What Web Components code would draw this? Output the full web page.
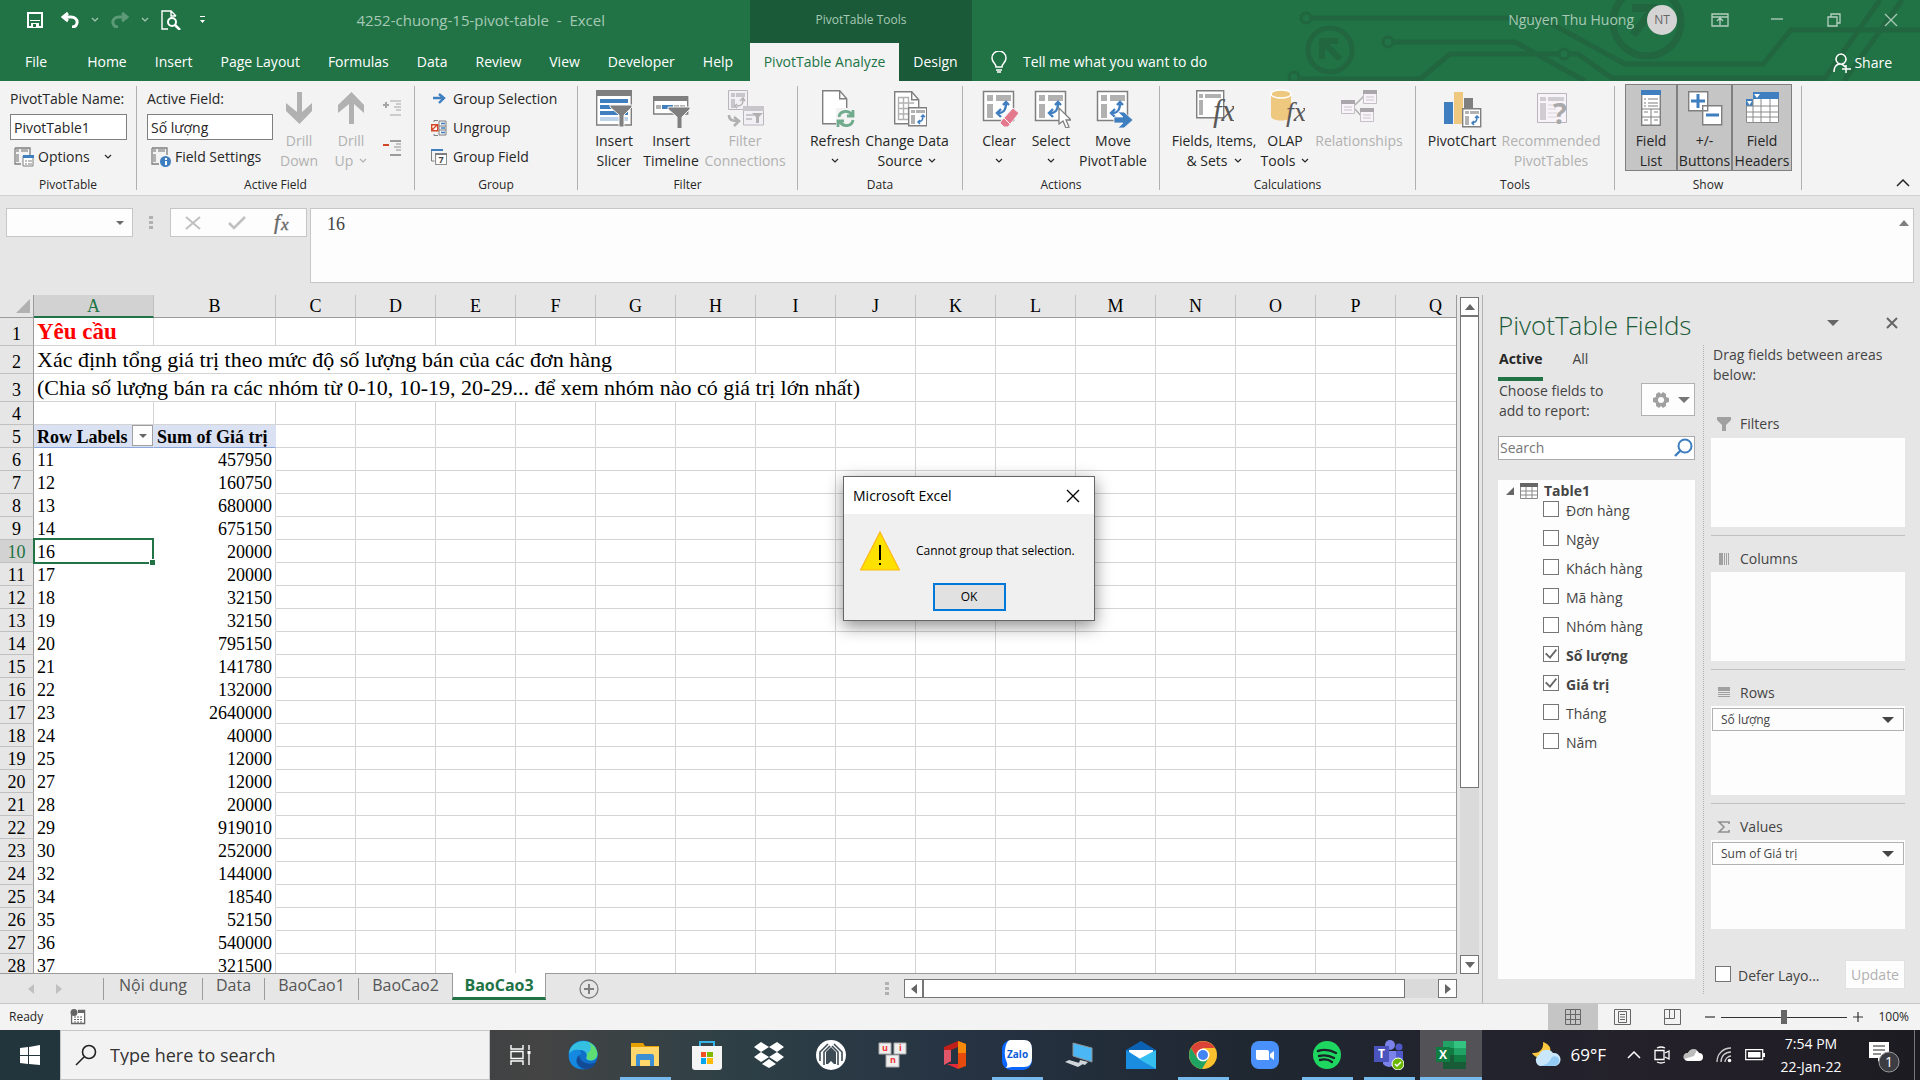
<!DOCTYPE html>
<html lang="vi">
<head>
<meta charset="utf-8">
<title>4252-chuong-15-pivot-table - Excel</title>
<style>
  html, body { height: 100%; margin: 0; }
  body {
    overflow: hidden;
    background: #e6e6e6;
    color: #262626;
    font-family: "Open Sans", "Noto Sans", sans-serif;
    font-size: 14px;
    line-height: 20px;
  }
</style>
</head>
<body>
<excel-app></excel-app>

<script>
// ---------- icons ----------
const pivotArrow = (c = '#3f7ebf') => `<path d="M19 25c6 0 8-3 8-10M24 17l3-3 3 3M22 21l-4 4 4 4" fill="none" stroke="${c}" stroke-width="2.4"/>`;
const pivotTable = (c = '#7f7f7f') => `<path d="M4.5 3.5h30v29h-30z" fill="#fff" stroke="${c}" stroke-width="1.5"/><path d="M8 7h6v6H8zM17 7h15v6H17zM8 16h6v14H8z" fill="#b1b1b1"/>`;
const smallTable = (x, y) => `<g transform="translate(${x} ${y})"><path d="M.7.7h18v18H.7z" fill="#fff" stroke="#7f7f7f" stroke-width="1.4"/><path d="M3 3h4v3H3zM8 3h9v3H8zM3 8h4v9H3z" fill="#b1b1b1"/><path d="M10 15c4 0 5-2 5-6M13 10l2-2 2 2M12 13l-2 2 2 2" fill="none" stroke="#3f7ebf" stroke-width="1.5"/></g>`;
const funnel = (x, y, c = '#7f7f7f') => `<path transform="translate(${x} ${y})" d="M0 0h22v2l-8 8v12h-5V10L0 2z" fill="${c}" stroke="#f3f3f3"/>`;
const fx = (x, y, s = 31) => `<text x="${x}" y="${y}" font-family="Liberation Serif" font-style="italic" font-size="${s}" fill="#595959">fx</text>`;

// name: [width, height, drawing]
const ICONS = {
  save: [16, 16, '<path d="M1 1h14v14H1z" fill="none" stroke="#fff" stroke-width="2"/><path d="M3 8h10v1H3zM4 11h8v5H4z" fill="#fff"/><path d="M6 12h3v3H6z" fill="#217346"/>'],
  undo: [18, 16, '<path d="M7 1 2 5l5 4M2 5h8c8 0 8 10 1 10" fill="none" stroke="#fff" stroke-width="3"/>'],
  redo: [18, 16, '<path d="m11 1 5 4-5 4M16 5H8C0 5 0 15 7 15" fill="none" stroke="#5d9a77" stroke-width="3"/>'],
  preview: [20, 20, '<path d="M7 19H1V1h9l5 5M10 1v5h5" fill="none" stroke="#fff" stroke-width="1.4"/><circle cx="11" cy="12" r="4" fill="none" stroke="#fff" stroke-width="2"/><path d="m14 15 5 5" stroke="#fff" stroke-width="2.5"/>'],
  custom: [8, 8, '<path d="M1 0h5v1H1zM1 4h5L3.5 7z" fill="#fff"/>'],
  chev: [8, 8, '<path d="m1 2 3 3 3-3" fill="none" stroke="currentColor" stroke-width="1.2"/>'],
  bulb: [16, 22, '<path d="M5 16c0-4-4-4-4-9a7 7 0 0 1 14 0c0 5-4 5-4 9zM5 19h6M6 21h4" fill="none" stroke="#fff" stroke-width="1.5"/>'],
  person: [18, 20, '<path d="M7 11a5 5 0 1 1 2 0M1 19c0-9 8-10 11-5M9 16h9M13 12v8" fill="none" stroke="#fff" stroke-width="1.5"/>'],
  ribbonopt: [18, 14, '<path d="M1 1h16v12H1zM1 4h16M9 12V6M6 8l3-3 3 3" fill="none" stroke="#b5d0c0" stroke-width="1.3"/>'],
  min: [14, 14, '<path d="M1 6h12" stroke="#b5d0c0" stroke-width="1.3"/>'],
  max: [14, 14, '<path d="M1 4h9v9H1zM4 4V1h9v9h-3" fill="none" stroke="#b5d0c0" stroke-width="1.3"/>'],
  close: [14, 14, '<path d="m1 1 12 12M13 1 1 13" stroke="currentColor" stroke-width="1.3"/>'],
  closebold: [14, 14, '<path d="m2 2 10 10M12 2 2 12" stroke="#666" stroke-width="2"/>'],
  options: [20, 20, '<path d="M1 1h15v7M1 1v16h6" fill="none" stroke="#7f7f7f" stroke-width="1.3"/><path d="M2 2h3v3H2zM7 2h7v3H7zM2 7h3v8H2z" fill="#b1b1b1"/><path d="M9 9h10v10H9z" fill="#fff" stroke="#7f7f7f"/><path d="M9 8h11v3H9z" fill="#3f7ebf"/><path d="M11 14h2m1 0h4m-7 3h2m1 0h4" stroke="#7f7f7f"/>'],
  settings: [20, 20, '<path d="M1 1h15v7M1 1v16h7" fill="none" stroke="#7f7f7f" stroke-width="1.3"/><path d="M2 2h3v3H2zM7 2h7v3H7zM2 7h3v8H2z" fill="#b1b1b1"/><circle cx="14.5" cy="14.5" r="5.5" fill="#3f7ebf"/><path d="M14 11h2v2h-2zM14 14h2v4h-2z" fill="#fff"/>'],
  down: [40, 40, '<path d="M18 4h5v20l10-9v8L20.5 36 7 23v-8l11 9z" fill="#b1b1b1"/>'],
  up: [40, 40, '<path d="M18 36h5V16l10 9v-8L20.5 4 7 17v8l11-9z" fill="#b1b1b1"/>'],
  expand: [18, 16, '<path d="M0 5h6M3 2v6" stroke="#a6a6a6" stroke-width="2"/><path d="M7 1h11M13 4h5M11 7h7M13 10h5M7 15h11" stroke="#c0c0c0" stroke-width="1.5"/>'],
  collapse: [18, 16, '<path d="M0 5h6" stroke="#d24726" stroke-width="2"/><path d="M7 1h11M7 15h11" stroke="#7f7f7f" stroke-width="1.5"/><path d="M13 4h5M11 7h7M13 10h5" stroke="#b1b1b1" stroke-width="1.5"/>'],
  arrow: [16, 16, '<path d="M2 7h10M8 3l5 4-5 5" fill="none" stroke="#3f7ebf" stroke-width="2.4"/>'],
  ungroup: [16, 16, '<path d="M3 2V.5h4M3 14v1.5h4M8 1h7v14H8zM8 6h7M8 10h7" fill="none" stroke="#7f7f7f"/><path d="M10 3.5h4M10 8h4M10 12.5h4" stroke="#3f7ebf" stroke-width="1.4"/><path d="M.7 4.7h6v6h-6zM1 10l5-5" fill="#fff" stroke="#d24726" stroke-width="1.4"/>'],
  groupfield: [16, 16, '<path d="M.5 1v11h3" fill="none" stroke="#7f7f7f"/><path d="M0 0h12v2H0z" fill="#3f7ebf"/><path d="M4.6 4.6h11v11h-11z" fill="#fff" stroke="#7f7f7f"/><path d="M4 4h12v2H4z" fill="#7f7f7f"/><text x="7.5" y="14" font-size="9" font-weight="bold" fill="#444">7</text>'],
  slicer: [40, 40, `<path d="M2.7 4h34.6v33H2.7z" fill="#fff" stroke="#7f7f7f" stroke-width="1.4"/><path d="M2 2h36v6H2z" fill="#7f7f7f"/><path d="M6 11h28v4H6zM6 17h28v4H6zM6 23h28v4H6z" fill="#3f7ebf"/><path d="M6 29h28v4H6z" fill="#bcd3ea"/>${funnel(16, 17)}`],
  timeline: [40, 40, `<path d="M2.7 9h34v17h-34z" fill="#fff" stroke="#7f7f7f" stroke-width="1.4"/><path d="M2 8h35v5H2z" fill="#7f7f7f"/><path d="M5 17h5v4H5zM23 17h5v4h-5zM29 17h5v4h-5z" fill="#b1b1b1"/><path d="M11 17h11v4H11z" fill="#3f7ebf"/>${funnel(17, 19)}`],
  connections: [40, 40, '<g fill="#f3f0f5" stroke="#b9b5bc"><path d="M3.5 2.5h19v19h-19zM18.5 19h20v18h-20z"/></g><path d="M6 5h4v4H6zM11 5h9v4h-9zM6 11h4v9H6zM18 18h21v5H18zM21 26h8v2h-8zM21 30h6v2h-6z" fill="#c9c6cb"/><path d="M12 18c5 0 6-2 6-6M15 13l3-3 2 3M12 16l-2 2 2 2" fill="none" stroke="#b1b1b1" stroke-width="1.5"/><path d="M27 25h11l-4 4v6h-3v-6z" fill="#b1b1b1"/><path d="M4 27c0 5 3 6 9 6M9 29l5 4-5 5" fill="none" stroke="#b1b1b1" stroke-width="2.6"/>'],
  refresh: [40, 40, '<path d="M7.7 2.7h17l7 8v25H7.7z" fill="#fff" stroke="#7f7f7f" stroke-width="1.4"/><path d="M24.7 2.7v8h7" fill="none" stroke="#7f7f7f" stroke-width="1.4"/><path d="M21 20h20v20H21z" fill="#f3f3f3"/><path d="M24 29c1-7 10-7 13-2M38 22v6h-6M38 32c-1 7-10 7-13 2M23 39v-6h6" fill="none" stroke="#70ab8d" stroke-width="2.8"/>'],
  source: [40, 40, `<path d="M7.7 3.7h17l7 8v24h-24z" fill="#fff" stroke="#7f7f7f" stroke-width="1.4"/><path d="M24.7 3.7v8h7" fill="none" stroke="#7f7f7f" stroke-width="1.4"/><path d="M11.5 9.5h10v22h-10zM16.5 9v23M11 15h16M11 20.5h12M11 26h12" fill="none" stroke="#b1b1b1" stroke-width="1.4"/>${smallTable(21, 19)}`],
  clear: [40, 40, `${pivotTable()}${pivotArrow()}<path d="m22 33 12-13 6 5-11 14h-4l-4-4z" fill="#e4798e" stroke="#f3f3f3"/><path d="m25 30 6 6" stroke="#fff"/>`],
  select: [40, 40, `${pivotTable()}${pivotArrow()}<path d="M28 20v16l4-3 3 7 3-1-3-7h5z" fill="#fff" stroke="#7f7f7f" stroke-width="1.3"/>`],
  move: [40, 40, `${pivotTable()}${pivotArrow()}<path d="M21 29h9l-5-5h6l9 8-9 8h-6l5-5h-9z" fill="#3f7ebf" stroke="#f3f3f3" stroke-width=".8"/>`],
  fields: [40, 40, `<path d="M2.7 2.7h27v27h-27z" fill="#fff" stroke="#7f7f7f" stroke-width="1.4"/><path d="M5 6h4v4H5zM11 6h16v4H11zM5 12h4v15H5z" fill="#b1b1b1"/>${fx(19, 33)}`],
  olap: [40, 40, `<path d="M6 6v22c0 6 20 6 20 0V6z" fill="#edc87e"/><ellipse cx="16" cy="6" rx="10" ry="4" fill="#edc87e" stroke="#fff" stroke-width="1.4"/>${fx(21, 33, 28)}`],
  relations: [40, 40, '<path d="m16 17 9-9M16 21l7 8" stroke="#b1b1b1" stroke-width="1.5"/><g fill="#f8f3f9" stroke="#c3bfc5"><path d="M2.5 12.5h13v13h-13zM24.5 2.5h13v13h-13zM21.5 20.5h13v13h-13z"/></g><path d="M2 12h14v4H2zM24 2h14v4H24zM21 20h14v4H21z" fill="#aaa6ac"/><path d="M5 19h8M5 22h8M27 9h8M27 12h8M24 27h8M24 30h8" stroke="#c9c6cb"/>'],
  chart: [40, 40, `<path d="M2 14h9v22H2z" fill="#3f7ebf"/><path d="M12 4h9v32h-9z" fill="#edc87e"/><path d="M22 10h9v12h-9z" fill="#7f7f7f"/>${smallTable(20, 20)}`],
  recommended: [40, 40, '<path d="M6.500 5.500h29v29h-29z" fill="#f8f3f9" stroke="#b9b5bc"/><path d="M9 9h6v4H9zM17 9h16v4H17zM9 15h6v17H9z" fill="#d0cdd2"/><path d="M17 17h11M17 21h8M17 25h9M17 29h9" stroke="#d9d6db"/><text x="22" y="36" font-size="29" font-weight="bold" fill="#a9a9a9">?</text>'],
  fieldlist: [40, 40, '<path d="M10.7 3h18.6v34.3H10.7z" fill="#fff" stroke="#7f7f7f" stroke-width="1.4"/><path d="M10 2h20v5H10z" fill="#3f7ebf"/><path d="M13 11h2m2 0h10M13 15h2m2 0h10M13 18h2m2 0h10M10 21h20M10 29h20M20 21v16M13 24h4M23 24h4M13 32h4M23 32h4" stroke="#7f7f7f"/>'],
  plusminus: [40, 40, '<g fill="#fff" stroke="#7f7f7f" stroke-width="1.4"><path d="M3.7 3.7h19v19h-19zM17.7 17.7h19v19h-19z"/></g><path d="M6 13h14M13 6v14M21 27h13" stroke="#3f7ebf" stroke-width="3"/>'],
  headers: [40, 40, '<path d="M11 4h26v31H4V11h7z" fill="#fff"/><path d="M11 4h26v7H11zM4 11h7v7H4z" fill="#3f7ebf"/><path d="M4.5 18v16.5h32V11M4 18h33M4 24h33M4 29h33M11 11v24M19 11v24M28 11v24" fill="none" stroke="#8a8a8a"/><path d="M12 6h6l-3 4zM5 13h5l-2.5 4z" fill="#fff"/>'],
  chevup: [14, 8, '<path d="m1 7 6-6 6 6" fill="none" stroke="currentColor" stroke-width="1.5"/>'],
  tri: [12, 8, '<path d="M0 1h12L6 7z" fill="currentColor"/>'],
  trismall: [8, 6, '<path d="M0 1h8L4 5z" fill="currentColor"/>'],
  triup: [10, 6, '<path d="M0 6h10L5 0z" fill="currentColor"/>'],
  left: [6, 10, '<path d="M6 0v10L0 5z" fill="currentColor"/>'],
  right: [6, 10, '<path d="M0 0v10l6-5z" fill="currentColor"/>'],
  dots: [4, 14, '<path d="M0 0h4v3H0zM0 5h4v3H0zM0 10h4v3H0z" fill="#b1b1b1"/>'],
  cross: [16, 14, '<path d="m1 1 14 12M15 1 1 13" stroke="#c0c0c0" stroke-width="2"/>'],
  check: [18, 14, '<path d="m1 7 5 5L17 1" fill="none" stroke="#c0c0c0" stroke-width="2.6"/>'],
  fx: [20, 22, '<text x="1" y="17" font-family="Liberation Serif" font-style="italic" font-size="21" fill="#6a6a6a" stroke="#6a6a6a" stroke-width=".4">f</text><text x="8" y="18" font-family="Liberation Serif" font-style="italic" font-size="17" fill="#6a6a6a" stroke="#6a6a6a" stroke-width=".4">x</text>'],
  gear: [16, 16, '<path d="m6 0 2 2 2-2 3 2v3l3 1v4l-3 1v3l-3 2-2-2-2 2-3-2v-3l-3-1V6l3-1V2z" fill="#a0a0a0"/><circle cx="8" cy="8" r="3" fill="#fdfdfd"/>'],
  search: [20, 20, '<circle cx="12" cy="8" r="6.5" fill="none" stroke="#3f7ebf" stroke-width="2"/><path d="m8 12-6 6" stroke="#3f7ebf" stroke-width="2.4"/>'],
  tree: [8, 8, '<path d="M8 0v8H0z" fill="#666"/>'],
  table: [18, 16, '<path d="M.5.5h17v15H.5zM0 8h18M0 12h18M6 4v12M12 4v12" fill="#fff" stroke="#8a8a8a"/><path d="M0 0h18v4H0z" fill="#666"/>'],
  filters: [16, 16, '<path d="M1 1h14v3l-5 5v6H6V9L1 4z" fill="#a0a0a0"/>'],
  columns: [16, 16, '<path d="M3 2h4v12H3zM8 2h1v12H8zM10 2h1v12h-1zM12 2h1v12h-1z" fill="#a0a0a0"/>'],
  rows: [16, 16, '<path d="M2 2h12v4H2zM2 7h12v1H2zM2 9h12v1H2zM2 11h12v1H2z" fill="#a0a0a0"/>'],
  values: [16, 16, '<path d="M13 5V3H3l5 5-5 5h10v-2" fill="none" stroke="#909090" stroke-width="1.6"/>'],
  plus: [20, 20, '<circle cx="10" cy="10" r="9" fill="none" stroke="#7f7f7f" stroke-width="1.3"/><path d="M5 10h10M10 5v10" stroke="#7f7f7f" stroke-width="2"/>'],
  macro: [16, 16, '<path d="M1.6 5v9.5h13v-13H8" fill="#fff" stroke="#666" stroke-width="1.3"/><circle cx="4" cy="3.5" r="3.5" fill="#666"/><path d="M8 1h7v3H8z" fill="#666"/><path d="M4 8h8M4 10.5h8M4 13h8" stroke="#666" stroke-dasharray="2 1"/>'],
  normal: [16, 16, '<path d="M.5.5h15v15H.5zM0 5.5h16M0 10.5h16M5.5 0v16M10.5 0v16" fill="none" stroke="#666"/>'],
  page: [18, 16, '<path d="M.5.5h16v15H.5zM4.5 2.5h8v11h-8zM6 5.5h5M6 8h5M6 10.5h5" fill="none" stroke="#666"/>'],
  breaks: [18, 16, '<path d="M.5.5h16v15H.5zM.5 9.5h10V.5M5.5.5v9" fill="none" stroke="#666"/>'],
  minus: [10, 10, '<path d="M0 5h10" stroke="#333" stroke-width="1.2"/>'],
  add: [10, 10, '<path d="M0 5h10M5 0v10" stroke="#333" stroke-width="1.2"/>'],
  warn: [40, 40, '<path d="M20 1 39.5 39H.5z" fill="#fce100" stroke="#ffb713" stroke-width="1.2"/><path d="M19 14h2v15h-2zM19 32h2v2h-2z" fill="#000"/>'],
  win: [20, 20, '<path d="m0 3 8-1v8H0zM9 2l11-2v10H9zM0 11h8v8l-8-1zM9 11h11v9L9 19z" fill="#fff"/>'],
  lens: [22, 22, '<circle cx="14" cy="8" r="6.5" fill="none" stroke="#222" stroke-width="1.6"/><path d="m9 13-8 8" stroke="#222" stroke-width="1.6"/>'],
  taskview: [22, 20, '<path d="M1 0v4h12V0M1 20v-4h12v4M1 6.5h12v7H1zM19 0v5M19 9v11" fill="none" stroke="#fff" stroke-width="1.4"/><path d="M17.5 6h3v3h-3z" fill="#fff"/>'],
  edge: [30, 30, '<circle cx="15" cy="15" r="14.5" fill="#0f6fc9"/><path d="M1 13C3-2 27-4 29.5 13c1 7-6 9-10 7-3-2 0-3-1-6-2-6-13-6-17 5z" fill="#35bfe0"/><path d="M20 2c7 3 10 9 9 13-1 6-8 6-10 4-1-2 1-3 0-6 5-1 5-8 1-11z" fill="#5fdd72"/><path d="M11 12c-6 7-1 17 8 17 5 0 8-4 9-7-7 4-18 1-17-10z" fill="#134b96"/><path d="M1 14c5-7 13-4 12 0-6 3-7 11 1 15C6 29 0 23 1 14z" fill="#1489df"/>'],
  folder: [28, 26, '<path d="M0 1h12l2 3h14v20H0z" fill="#e5a000"/><path d="M0 5h28v19H0z" fill="#ffd76a"/><path d="M5 24V14q0-2 2-2h14q2 0 2 2v10h-4v-6H9v6z" fill="#3d8fd3"/>'],
  store: [30, 30, '<path d="M8 8V2h14v6" fill="none" stroke="#35b4e8" stroke-width="2"/><path d="M0 6h30v21q0 3-3 3H3q-3 0-3-3z" fill="#f4f4f4"/><path d="M9 12h5v5H9z" fill="#f25022"/><path d="M15 12h6v5h-6z" fill="#7fba00"/><path d="M9 18h5v6H9z" fill="#00a4ef"/><path d="M15 18h6v6h-6z" fill="#ffb900"/>'],
  dropbox: [30, 26, '<path d="m7 0 8 5-8 5-7-5zM23 0l7 5-7 5-8-5zM7 10l8 5-8 5-7-5zM23 10l7 5-7 5-8-5zM15 17l7 5-7 4-7-4z" fill="#fff"/>'],
  arch: [30, 30, '<circle cx="15" cy="15" r="15" fill="#fff"/><path d="M4 21V12l8-8M26 21V12l-8-8" fill="none" stroke="#3d4c54" stroke-width="1.6"/><path d="M8 25V12l6-6M22 25V12l-6-6" fill="none" stroke="#3d4c54" stroke-width="1.6"/><path d="M10 24V12l5-5 5 5v12h-2l-3-3-3 3z" fill="#3d4c54"/>'],
  unikey: [30, 26, '<g fill="#eee" stroke="#aaa"><path d="M1 1h12v11H1zM16 1h12v11H16zM8 13h13v12H8z"/></g><g font-size="9" font-weight="bold" fill="#ee343a"><text x="4" y="9">u</text><text x="21" y="9">i</text><text x="12" y="21">n</text></g>'],
  office: [24, 28, '<path d="M15 0v6L8 9v12H1V6z" fill="#c01f1a"/><path d="M1 9h7v11l-7 4z" fill="#e0566a"/><path d="m15 0 8 3v22l-8 3z" fill="#e64a0c"/><path d="m15 0 8 3v9h-8z" fill="#f58a0b"/><path d="M4 23h11v5z" fill="#e8293c"/>'],
  zalo: [30, 30, '<rect width="30" height="30" rx="9" fill="#0a66ff"/><path d="M8 0h14q8 0 8 9v9q0 9-8 9H10l-6 1q2-3 1-5-3-6-2-13 1-9 5-10z" fill="#fff"/><text x="5" y="18" font-size="10" font-weight="bold" fill="#0a5cd8">Zalo</text>'],
  remote: [28, 26, '<path d="m8 1 19 5v14L8 14z" fill="#4bb8f5" stroke="#8b9499"/><path d="m4 18 14 4-5 3-13-5zM15 18l8 2-3 3-6-2z" fill="#cfd6da"/>'],
  mail: [30, 28, '<path d="m0 9 15-9 15 9v19H0z" fill="#0b62b3"/><path d="M3 9h24v12L15 25 3 18z" fill="#fff"/><path d="m0 9 30 19H0z" fill="#1b8de0"/><path d="M30 9v19L13 18z" fill="#35bff0"/>'],
  chrome: [28, 28, '<circle cx="14" cy="14" r="14" fill="#fbc02d"/><path d="M2 7a14 14 0 0 1 24 0H14L8 17z" fill="#db4437"/><path d="M2 7a14 14 0 0 0 11 21l6-10-11-1z" fill="#1ea362"/><circle cx="14" cy="14" r="6.5" fill="#fff"/><circle cx="14" cy="14" r="5" fill="#4285f4"/>'],
  zoom: [28, 28, '<rect width="28" height="28" rx="8" fill="#4a90fa"/><path d="M5 9h11q2 0 2 2v8H7q-2 0-2-2zM19 13l4-3v9l-4-3z" fill="#fff"/>'],
  spotify: [28, 28, '<circle cx="14" cy="14" r="14" fill="#1ed760"/><path d="M5 10q9-3 18 2M6 15q8-2 15 2M7 19q7-2 12 2" fill="none" stroke="#1b2228" stroke-width="2.4" stroke-linecap="round"/>'],
  teams: [30, 30, '<circle cx="16" cy="5" r="5" fill="#7b83eb"/><circle cx="25" cy="7" r="3.5" fill="#5059c9"/><path d="M9 11h14v9a8 8 0 0 1-14 4z" fill="#7b83eb"/><path d="M22 11h7v8q-2 5-7 4z" fill="#5059c9"/><path d="M0 6h15v16H0z" fill="#4b53bc"/><text x="4" y="18" font-size="12" font-weight="bold" fill="#fff">T</text><circle cx="24" cy="24" r="6" fill="#6bb700" stroke="#fff"/><path d="m21 24 2 2 4-4" fill="none" stroke="#fff" stroke-width="1.5"/>'],
  excel: [30, 28, '<path d="M7 0h11v7H7z" fill="#21a366"/><path d="M18 0h12v7H18z" fill="#33c481"/><path d="M7 7h11v7H7z" fill="#107c41"/><path d="M18 7h12v7H18z" fill="#21a366"/><path d="M7 14h11v7H7z" fill="#185c37"/><path d="M18 14h12v7H18z" fill="#107c41"/><path d="M7 21h23v7H7z" fill="#185c37"/><path d="M0 6h14v15H0z" fill="#107c41"/><text x="3" y="18" font-size="12" font-weight="bold" fill="#fff">X</text>'],
  weather: [30, 26, '<path d="M11 0c1 6-3 12-11 11 3 6 14 7 18-1C20 4 14 1 11 0z" fill="#ffc83d"/><path d="M8 24a6 6 0 0 1-1-11 8 8 0 0 1 14-2 6 6 0 0 1 2 13z" fill="#c9e6fb"/><path d="M8 24c6-1 9-3 12-9 3-2 8 0 7 5-1 4-6 4-9 4z" fill="#94cbf5"/>'],
  meet: [16, 18, '<path d="M1 4.5h9v9H1zM11 7l4-2v8l-4-2M3 2q4-2 8 0M3 16q4 2 8 0" fill="none" stroke="#fff" stroke-width="1.3"/>'],
  cloud: [20, 14, '<path d="M5 13a4 4 0 0 1 0-8 6 6 0 0 1 11 0 4 4 0 0 1 0 8z" fill="#fff"/><path d="M5 5a6 6 0 0 1 9-3l-3 6-10 3a4 4 0 0 1 4-6z" fill="#bbb"/>'],
  wifi: [16, 16, '<path d="M1 15C1 7 7 1 15 1M5 15C5 9 9 5 15 5M9 15c0-3 3-6 6-6" fill="none" stroke="#ccc" stroke-width="1.3"/><circle cx="13.5" cy="13.5" r="1.8" fill="#fff"/>'],
  battery: [20, 12, '<path d="M.7.7h17v10H.7z" fill="none" stroke="#fff" stroke-width="1.2"/><path d="M3 3h12.5v5.5H3zM18 4h2v4h-2z" fill="#fff"/>'],
  note: [32, 32, '<path d="M0 1h20v16h-8l-3 4v-4H0z" fill="#fff"/><path d="M4 5h12M4 9h12M4 13h8" stroke="#222"/><circle cx="20" cy="21" r="10" fill="#3b3d42" stroke="#999"/><text x="16" y="26" font-size="14" fill="#fff">1</text>'],
  corner: [14, 14, '<path d="M14 0v14H0z" fill="#b1b1b1"/>'],
};

class XlIcon extends HTMLElement {
  connectedCallback() {
    const [w, h, art] = ICONS[this.getAttribute('name')];
    this.attachShadow({ mode: 'open' }).innerHTML = `
      <style>
        :host { display: inline-flex; flex: none; }
        svg { display: block; font-family: "Open Sans", sans-serif; }
      </style>
      <svg width="${w}" height="${h}" viewBox="0 0 ${w} ${h}" aria-hidden="true">${art}</svg>`;
  }
}
customElements.define('xl-icon', XlIcon);

// Shared base: stamps styles and markup into an open shadow root.
class XlElement extends HTMLElement {
  connectedCallback() {
    if (this.shadowRoot) return;
    const template = document.createElement('template');
    template.innerHTML = `
      <style>
        *, *::before, *::after { box-sizing: border-box; }
        button, input, select { margin: 0; padding: 0; font: inherit; color: inherit; background: none; border: 0; border-radius: 0; outline: 0; }
        button { white-space: nowrap; }
        ${this.getStyles()}
      </style>
      ${this.getMarkup()}`;
    this.attachShadow({ mode: 'open' }).appendChild(template.content.cloneNode(true));
  }
}

// ---------- title bar and tabs ----------
class TitleBar extends XlElement {
  getStyles() {
    return `
      :host { display: grid; grid-template-columns: 750px 222px 1fr; position: relative; background: #217346; color: #fff; height: 81px; }
      .art { position: absolute; right: 0; top: 0; }
      .part { display: grid; grid-template-rows: 43px 38px; position: relative; }
      .top { display: flex; align-items: center; color: #a6c9b5; padding-bottom: 4px; }
      .quick { gap: 12px; padding-left: 27px; }
      .quick button { display: flex; }
      .quick .push { margin-left: 6px; }
      .name { margin-left: auto; padding-right: 145px; white-space: pre; font-size: 15px; }
      .tabs { display: flex; padding-left: 11px; }
      .tabs a { color: #fff; text-decoration: none; padding: 9px 14px 0; white-space: nowrap; }
      .tabs a:first-child { margin-right: 12px; }
      .context { background: #1b5a38; }
      .context .top { justify-content: center; font-size: 12px; }
      .context .tabs { padding: 0; }
      .context a { padding: 9px 0 0; width: 73px; text-align: center; }
      .context a.active { background: #f3f3f3; color: #217346; width: 149px; margin: 0; }
      .user { justify-content: flex-end; padding-right: 20px; }
      .avatar { width: 30px; height: 30px; border-radius: 50%; background: #d4d4d4; color: #666; display: grid; place-items: center; font-size: 12px; margin: 0 34px 0 13px; }
      .user button { display: grid; place-items: center; width: 18px; margin-right: 39px; }
      .user button:last-child { margin-right: 0; }
      .row { display: flex; justify-content: space-between; padding: 0 28px 0 19px; }
      .row button { display: flex; align-items: center; gap: 16px; height: 38px; }
      .row .share { gap: 3px; padding-top: 2px; }
    `;
  }
  getMarkup() {
    const tab = t => `<a href="#">${t}</a>`;
    return `
      <svg class="art" width="640" height="81" viewBox="0 0 640 81" fill="none" stroke="#21663f" stroke-width="5" aria-hidden="true">
        <circle cx="26" cy="18" r="5" stroke-width="3"/><path d="M31 18h200l30 0 84 46h138l28-34h129"/>
        <circle cx="108" cy="42" r="5" stroke-width="3"/><path d="M113 42h122l70 39"/>
        <circle cx="14" cy="77" r="5" stroke-width="3"/><path d="M19 79h121l30-25h108M290 54h8l34 24h213L600 0M564 81 622 0"/>
        <circle cx="284" cy="54" r="5" stroke-width="3"/>
        <circle cx="50" cy="50" r="22"/><path d="M42 59V41h16M43 42l17 17" stroke-width="6"/>
        <circle cx="367" cy="22" r="34" stroke-width="7"/><path d="M352 8h22v20M374 8l-21 27" stroke-width="8"/>
      </svg>
      <div class="part">
        <div class="top quick">
          <button aria-label="Save"><xl-icon name="save"></xl-icon></button>
          <button aria-label="Undo" class="push"><xl-icon name="undo"></xl-icon></button><xl-icon name="chev"></xl-icon>
          <button aria-label="Redo"><xl-icon name="redo"></xl-icon></button><xl-icon name="chev"></xl-icon>
          <button aria-label="Print Preview"><xl-icon name="preview"></xl-icon></button>
          <button aria-label="Customize" class="push"><xl-icon name="custom"></xl-icon></button>
          <span class="name">4252-chuong-15-pivot-table  -  Excel</span>
        </div>
        <nav class="tabs">${['File', 'Home', 'Insert', 'Page Layout', 'Formulas', 'Data', 'Review', 'View', 'Developer', 'Help'].map(tab).join('')}</nav>
      </div>
      <div class="part context">
        <div class="top">PivotTable Tools</div>
        <nav class="tabs"><a href="#" class="active">PivotTable Analyze</a><a href="#">Design</a></nav>
      </div>
      <div class="part">
        <div class="top user">
          <span>Nguyen Thu Huong</span><span class="avatar">NT</span>
          <button aria-label="Ribbon options"><xl-icon name="ribbonopt"></xl-icon></button>
          <button aria-label="Minimize"><xl-icon name="min"></xl-icon></button>
          <button aria-label="Restore"><xl-icon name="max"></xl-icon></button>
          <button aria-label="Close"><xl-icon name="close"></xl-icon></button>
        </div>
        <div class="row">
          <button><xl-icon name="bulb"></xl-icon>Tell me what you want to do</button>
          <button class="share"><xl-icon name="person"></xl-icon>Share</button>
        </div>
      </div>`;
  }
}
customElements.define('title-bar', TitleBar);

// ---------- ribbon ----------
class RibbonGroup extends XlElement {
  getStyles() {
    return `
      :host { display: grid; grid-template-columns: 1fr 1px; height: 114px; }
      .main { display: grid; grid-template-rows: 94px 1fr; min-width: 0; }
      .content { display: flex; padding: 3px 0 0 10px; }
      .caption { text-align: center; font-size: 12px; line-height: 20px; }
      .sep { background: #b1b1b1; margin: 5px 0; }
    `;
  }
  getMarkup() {
    return `
      <div class="main"><div class="content"><slot></slot></div><div class="caption">${this.getAttribute('caption')}</div></div>
      <div class="sep"></div>`;
  }
}
customElements.define('ribbon-group', RibbonGroup);

class RibbonButton extends XlElement {
  getStyles() {
    return `
      :host { display: block; flex: 0 0 auto; width: var(--w); }
      button { width: 100%; height: 87px; display: flex; flex-direction: column; align-items: center; padding-top: 4px; }
      span { display: flex; align-items: center; gap: 6px; height: 20px; }
      span:first-of-type { margin-top: 3px; }
      :host([disabled]) button { color: #b1b1b1; }
      :host([pressed]) button { background: #c5c5c5; outline: 1px solid #7f7f7f; outline-offset: -1px; }
    `;
  }
  getMarkup() {
    const [first, second = ''] = this.getAttribute('label').split('|');
    const chev = this.hasAttribute('menu') ? '<xl-icon name="chev"></xl-icon>' : '';
    return `<button ${this.hasAttribute('disabled') ? 'disabled' : ''}><xl-icon name="${this.getAttribute('icon')}"></xl-icon><span>${first}</span><span>${second}${chev}</span></button>`;
  }
}
customElements.define('ribbon-button', RibbonButton);

class RibbonBar extends XlElement {
  getStyles() {
    return `
      :host { display: grid; grid-template-columns: 137px 278px 163px 220px 165px 197px 256px 199px 187px 1fr; background: #f3f3f3; border-bottom: 1px solid #d2d2d2; }
      .stack { display: flex; flex-direction: column; padding-top: 4px; white-space: nowrap; }
      .stack label { height: 26px; padding-top: 1px; }
      .stack input { height: 26px; width: 117px; border: 1px solid #7f7f7f; background: #fff; padding-left: 3px; margin-bottom: 4px; }
      .stack .wide { width: 126px; }
      .stack button { display: flex; align-items: center; gap: 4px; height: 26px; padding-left: 4px; }
      .stack button .push { margin-left: 10px; }
      .stack.list button { gap: 6px; padding-left: 6px; height: 29px; }
      .stack.list { padding-top: 0; }
      .mini { display: flex; flex-direction: column; gap: 24px; padding: 16px 0 0 6px; }
      .mini button { display: flex; }
      .end { display: flex; justify-content: flex-end; align-items: flex-end; padding: 0 10px 3px 0; }
    `;
  }
  getMarkup() {
    return `
      <ribbon-group caption="PivotTable">
        <div class="stack">
          <label for="pt">PivotTable Name:</label><input id="pt" value="PivotTable1">
          <button><xl-icon name="options"></xl-icon>Options <xl-icon class="push" name="chev"></xl-icon></button>
        </div>
      </ribbon-group>
      <ribbon-group caption="Active Field">
        <div class="stack">
          <label for="af">Active Field:</label><input id="af" class="wide" value="Số lượng">
          <button><xl-icon name="settings"></xl-icon>Field Settings</button>
        </div>
        <ribbon-button style="--w:52px" icon="down" label="Drill|Down" disabled></ribbon-button>
        <ribbon-button style="--w:52px" icon="up" label="Drill|Up" menu disabled></ribbon-button>
        <div class="mini">
          <button aria-label="Expand Field"><xl-icon name="expand"></xl-icon></button>
          <button aria-label="Collapse Field"><xl-icon name="collapse"></xl-icon></button>
        </div>
      </ribbon-group>
      <ribbon-group caption="Group">
        <div class="stack list">
          <button><xl-icon name="arrow"></xl-icon>Group Selection</button>
          <button><xl-icon name="ungroup"></xl-icon>Ungroup</button>
          <button><xl-icon name="groupfield"></xl-icon>Group Field</button>
        </div>
      </ribbon-group>
      <ribbon-group caption="Filter">
        <ribbon-button style="--w:52px" icon="slicer" label="Insert|Slicer"></ribbon-button>
        <ribbon-button style="--w:62px" icon="timeline" label="Insert|Timeline"></ribbon-button>
        <ribbon-button style="--w:86px" icon="connections" label="Filter|Connections" disabled></ribbon-button>
      </ribbon-group>
      <ribbon-group caption="Data">
        <ribbon-button style="--w:54px" icon="refresh" label="Refresh" menu></ribbon-button>
        <ribbon-button style="--w:90px" icon="source" label="Change Data|Source" menu></ribbon-button>
      </ribbon-group>
      <ribbon-group caption="Actions">
        <ribbon-button style="--w:52px" icon="clear" label="Clear" menu></ribbon-button>
        <ribbon-button style="--w:52px" icon="select" label="Select" menu></ribbon-button>
        <ribbon-button style="--w:72px" icon="move" label="Move|PivotTable"></ribbon-button>
      </ribbon-group>
      <ribbon-group caption="Calculations">
        <ribbon-button style="--w:88px" icon="fields" label="Fields, Items,|&amp; Sets" menu></ribbon-button>
        <ribbon-button style="--w:54px" icon="olap" label="OLAP|Tools" menu></ribbon-button>
        <ribbon-button style="--w:94px" icon="relations" label="Relationships" disabled></ribbon-button>
      </ribbon-group>
      <ribbon-group caption="Tools">
        <ribbon-button style="--w:72px" icon="chart" label="PivotChart"></ribbon-button>
        <ribbon-button style="--w:106px" icon="recommended" label="Recommended|PivotTables" disabled></ribbon-button>
      </ribbon-group>
      <ribbon-group caption="Show">
        <ribbon-button style="--w:52px" icon="fieldlist" label="Field|List" pressed></ribbon-button>
        <ribbon-button style="--w:55px" icon="plusminus" label="+/-|Buttons" pressed></ribbon-button>
        <ribbon-button style="--w:60px" icon="headers" label="Field|Headers" pressed></ribbon-button>
      </ribbon-group>
      <div class="end"><button aria-label="Collapse the Ribbon"><xl-icon name="chevup"></xl-icon></button></div>`;
  }
}
customElements.define('ribbon-bar', RibbonBar);

// ---------- formula bar ----------
class FormulaBar extends XlElement {
  getStyles() {
    return `
      :host { display: flex; align-items: flex-start; padding: 12px 6px; }
      .box { border: 1px solid #c6c6c6; background: #fdfdfd; height: 29px; display: flex; align-items: center; color: #6a6a6a; }
      .name { width: 127px; padding-right: 8px; }
      .name input { flex: 1; min-width: 0; }
      .dots { padding: 8px 17px 0 16px; }
      .buttons { width: 137px; justify-content: space-around; }
      .buttons button { display: flex; }
      .formula { flex: 1; height: 75px; margin-left: 3px; align-items: flex-start; padding: 4px 4px 0 16px; font: 18px/22px "Liberation Serif", serif; color: #444; }
      .formula input { flex: 1; }
      .formula button { display: flex; padding-top: 7px; color: #7f7f7f; }
    `;
  }
  getMarkup() {
    return `
      <div class="box name"><input aria-label="Name Box"><xl-icon name="trismall"></xl-icon></div>
      <xl-icon class="dots" name="dots"></xl-icon>
      <div class="box buttons">
        <button aria-label="Cancel"><xl-icon name="cross"></xl-icon></button>
        <button aria-label="Enter"><xl-icon name="check"></xl-icon></button>
        <button aria-label="Insert Function"><xl-icon name="fx"></xl-icon></button>
      </div>
      <div class="box formula"><input aria-label="Formula" value="16"><button aria-label="Collapse"><xl-icon name="triup"></xl-icon></button></div>`;
  }
}
customElements.define('formula-bar', FormulaBar);

// ---------- sheet ----------
const PIVOT_ROWS = [
  [11, 457950], [12, 160750], [13, 680000], [14, 675150], [16, 20000], [17, 20000], [18, 32150], [19, 32150],
  [20, 795150], [21, 141780], [22, 132000], [23, 2640000], [24, 40000], [25, 12000], [27, 12000], [28, 20000],
  [29, 919010], [30, 252000], [32, 144000], [34, 18540], [35, 52150], [36, 540000], [37, 321500],
];

class SheetGrid extends XlElement {
  getStyles() {
    return `
      :host { display: block; overflow: hidden; min-height: 0; border-right: 1px solid #9b9b9b; border-bottom: 1px solid #9b9b9b; background: #fff; font: 18px/20px "Liberation Serif", serif; color: #000; }
      table { border-collapse: separate; border-spacing: 0; table-layout: fixed; width: 1476px; }
      .n { width: 34px; } .a { width: 120px; } .b { width: 122px; } .c { width: 80px; }
      th { font-weight: normal; background: #e6e6e6; padding: 2px 0 0; }
      thead th { height: 23px; padding: 0; border-right: 1px solid #c0c0c0; border-bottom: 1px solid #9b9b9b; }
      thead th:first-child { border-right-color: #9b9b9b; }
      thead xl-icon { display: flex; justify-content: flex-end; padding-right: 3px; }
      thead .on { background: #d2d2d2; color: #217346; border-bottom: 2px solid #217346; }
      tbody th { border-right: 1px solid #9b9b9b; border-bottom: 1px solid #c0c0c0; }
      tbody .on { background: #d2d2d2; color: #217346; }
      td { padding: 2px 3px 0; border-right: 1px solid #d4d4d4; border-bottom: 1px solid #d4d4d4; white-space: nowrap; position: relative; }
      tr { height: 23px; }
      .tall { height: 28px; }
      .tall td { font-size: 22px; line-height: 26px; padding-top: 0; }
      .tall th { padding-top: 5px; }
      .tall .title { color: #f00; font-weight: bold; font-size: 23px; }
      .head { background: #d9e1f2; border-bottom-color: #8ea9db; border-right-color: #d9e1f2; font-weight: bold; }
      .head button { position: absolute; right: 0; top: 0; width: 21px; height: 21px; border: 1px solid #a0a0a0; background: #fdfdfd; display: grid; place-items: center; color: #666; }
      .label { border-color: #fff; }
      .value { border-bottom-color: #fff; text-align: right; }
      .cursor { z-index: 1; }
      .cursor::before { content: ""; position: absolute; inset: -2px -1px -2px -1px; border: 2px solid #217346; }
      .cursor::after { content: ""; position: absolute; right: -3px; bottom: -4px; width: 7px; height: 7px; background: #217346; border: 1px solid #fff; }
    `;
  }
  getMarkup() {
    const empty = n => '<td></td>'.repeat(n);
    const letters = [...'ABCDEFGHIJKLMNOPQ'].map(l => `<th${l === 'A' ? ' class="on"' : ''}>${l}</th>`).join('');
    const data = PIVOT_ROWS.map(([label, value], i) => {
      const on = label === 16;
      return `<tr><th${on ? ' class="on"' : ''}>${i + 6}</th><td class="label${on ? ' cursor' : ''}">${label}</td><td class="value">${value}</td>${empty(15)}</tr>`;
    }).join('');
    return `
      <table>
        <colgroup><col class="n"><col class="a"><col class="b">${'<col class="c">'.repeat(15)}</colgroup>
        <thead><tr><th><xl-icon name="corner"></xl-icon></th>${letters}</tr></thead>
        <tbody>
          <tr class="tall"><th>1</th><td class="title">Yêu cầu</td>${empty(16)}</tr>
          <tr class="tall"><th>2</th><td colspan="7">Xác định tổng giá trị theo mức độ số lượng bán của các đơn hàng</td>${empty(10)}</tr>
          <tr class="tall"><th>3</th><td colspan="10">(Chia số lượng bán ra các nhóm từ 0-10, 10-19, 20-29... để xem nhóm nào có giá trị lớn nhất)</td>${empty(7)}</tr>
          <tr><th>4</th>${empty(17)}</tr>
          <tr><th>5</th><td class="head">Row Labels<button aria-label="Filter"><xl-icon name="trismall"></xl-icon></button></td><td class="head">Sum of Giá trị</td>${empty(15)}</tr>
          ${data}
        </tbody>
      </table>`;
  }
}
customElements.define('sheet-grid', SheetGrid);

class ScrollBar extends XlElement {
  getStyles() {
    return `
      :host { display: flex; background: #dadada; color: #666; }
      :host([vertical]) { flex-direction: column; width: 19px; }
      :host(:not([vertical])) { height: 19px; }
      button { flex: 0 0 19px; display: grid; place-items: center; background: #fff; border: 1px solid #767676; }
      .thumb { background: #fff; border: 1px solid #767676; flex: 0 1 var(--size); }
      .gap { flex: 1; }
      .flip { transform: rotate(180deg); }
    `;
  }
  getMarkup() {
    const v = this.hasAttribute('vertical');
    return `
      <button aria-label="Back"><xl-icon name="${v ? 'triup' : 'left'}"></xl-icon></button>
      <div class="thumb"></div><div class="gap"></div>
      <button aria-label="Forward"><xl-icon ${v ? 'class="flip"' : ''} name="${v ? 'triup' : 'right'}"></xl-icon></button>`;
  }
}
customElements.define('scroll-bar', ScrollBar);

class SheetTabs extends XlElement {
  getStyles() {
    return `
      :host { display: flex; height: 29px; font-size: 16px; line-height: 22px; color: #555; }
      .nav { display: flex; gap: 22px; width: 103px; padding: 10px 0 0 28px; color: #c0c0c0; }
      a { color: inherit; text-decoration: none; text-align: center; width: var(--w); height: 26px; position: relative; white-space: nowrap; border-left: 1px solid transparent; background: linear-gradient(#9b9b9b, #9b9b9b) 0 4px / 1px 22px no-repeat; background-origin: border-box; }
      a.active { background: #fff; color: #217346; font-weight: bold; border: 0 solid #9b9b9b; border-width: 0 1px 3px; border-bottom-color: #217346; margin-top: -1px; height: 27px; padding-top: 1px; }
      .new { display: flex; padding: 5px 0 0 33px; }
      .dots { margin-left: auto; padding: 8px 15px 0 0; }
      scroll-bar { width: 553px; margin-top: 5px; }
    `;
  }
  getMarkup() {
    return `
      <div class="nav"><xl-icon name="left"></xl-icon><xl-icon name="right"></xl-icon></div>
      <a href="#" style="--w:99px">Nội dung</a><a href="#" style="--w:62px">Data</a><a href="#" style="--w:94px">BaoCao1</a><a href="#" style="--w:94px">BaoCao2</a><a href="#" class="active" style="--w:94px">BaoCao3</a>
      <button class="new" aria-label="New sheet"><xl-icon name="plus"></xl-icon></button>
      <xl-icon class="dots" name="dots"></xl-icon>
      <scroll-bar style="--size:482px"></scroll-bar>`;
  }
}
customElements.define('sheet-tabs', SheetTabs);

// ---------- field pane ----------
class AreaBox extends XlElement {
  getStyles() {
    return `
      :host { display: block; height: 134px; }
      .title { display: flex; align-items: center; gap: 8px; height: 37px; padding: 9px 0 0 5px; }
      :host([ruled]) .title { border-top: 1px solid #c0c0c0; }
      .well { background: #fdfdfd; height: 89px; padding: 2px 1px; }
      .item { position: relative; display: block; }
      select { appearance: none; display: block; width: 100%; height: 23px; line-height: 20px; border: 1px solid #b1b1b1; padding-left: 8px; font-size: 12px; }
      .item xl-icon { position: absolute; right: 10px; top: 8px; }
    `;
  }
  getMarkup() {
    const field = this.getAttribute('field');
    const name = this.getAttribute('name');
    const item = field ? `<label class="item"><select aria-label="${name}"><option>${field}</option></select><xl-icon name="tri"></xl-icon></label>` : '';
    return `<div class="title"><xl-icon name="${name.toLowerCase()}"></xl-icon>${name}</div><div class="well">${item}</div>`;
  }
}
customElements.define('area-box', AreaBox);

class FieldCheck extends XlElement {
  getStyles() {
    return `
      :host { display: block; height: 29px; }
      label { display: flex; gap: 7px; line-height: 20px; white-space: nowrap; }
      input { appearance: none; flex: none; width: 16px; height: 16px; border: 1px solid #767676; background: #fff; }
      input:checked::after { content: ""; display: block; width: 12px; height: 10px; margin: 2px 1px; background: #666; clip-path: polygon(0 50%, 12% 38%, 40% 72%, 90% 0, 100% 12%, 42% 100%); }
      :host([checked]) label { font-weight: bold; }
    `;
  }
  getMarkup() {
    return `<label><input type="checkbox" ${this.hasAttribute('checked') ? 'checked' : ''}><slot></slot></label>`;
  }
}
customElements.define('field-check', FieldCheck);

class FieldPane extends XlElement {
  getStyles() {
    return `
      :host { display: grid; grid-template-rows: 50px 1fr; border-left: 1px solid #b1b1b1; padding: 0 15px 9px; color: #444; }
      header { display: flex; align-items: center; padding-top: 9px; }
      h2 { font-weight: 300; font-size: 26px; line-height: 32px; color: #1b5a38; margin: 0 auto 0 0; }
      header button { display: flex; margin: 0 6px 4px 40px; color: #666; }
      .cols { display: grid; grid-template-columns: 197px 1fr; }
      .left { display: flex; flex-direction: column; padding-bottom: 15px; }
      .tabs { display: flex; gap: 28px; height: 36px; }
      .tabs a { color: inherit; text-decoration: none; padding: 4px 1px 0; }
      .tabs .active { font-weight: bold; color: #262626; border-bottom: 4px solid #217346; }
      .choose { display: flex; justify-content: space-between; height: 55px; line-height: 20px; padding-left: 1px; }
      .choose p { margin: 0; white-space: nowrap; }
      .choose button { width: 54px; height: 33px; margin-top: 2px; display: flex; align-items: center; justify-content: flex-end; gap: 9px; padding-right: 4px; border: 1px solid #b1b1b1; background: #fdfdfd; color: #767676; }
      .find { display: flex; align-items: center; height: 24px; border: 1px solid #ababab; background: #fff; padding: 0 1px; }
      .find input { flex: 1; min-width: 0; }
      .find input::placeholder { color: #767676; opacity: 1; }
      .list { flex: 1; margin-top: 20px; background: #fdfdfd; }
      .root { display: flex; align-items: center; gap: 6px; height: 21px; padding-left: 8px; font-weight: bold; }
      .fields { padding-left: 45px; }
      .right { margin-left: 8px; border-left: 1px dotted #b1b1b1; padding-left: 7px; display: flex; flex-direction: column; }
      .right p { margin: 0; height: 56px; padding: 0 2px; }
      .defer { display: flex; justify-content: space-between; margin-top: auto; height: 34px; padding-left: 4px; }
      .defer field-check { padding-top: 6px; }
      .defer button { width: 60px; height: 29px; color: #b1b1b1; background: #fdfdfd; border: 1px solid #e1e1e1; }
    `;
  }
  getMarkup() {
    return `
      <header><h2>PivotTable Fields</h2>
        <button aria-label="Pane options"><xl-icon name="tri"></xl-icon></button><button aria-label="Close pane"><xl-icon name="closebold"></xl-icon></button>
      </header>
      <div class="cols">
        <div class="left">
          <nav class="tabs"><a href="#" class="active">Active</a><a href="#">All</a></nav>
          <div class="choose"><p>Choose fields to<br>add to report:</p><button aria-label="Tools"><xl-icon name="gear"></xl-icon><xl-icon name="tri"></xl-icon></button></div>
          <div class="find"><input type="text" placeholder="Search" aria-label="Search"><xl-icon name="search"></xl-icon></div>
          <div class="list">
            <div class="root"><xl-icon name="tree"></xl-icon><xl-icon name="table"></xl-icon>Table1</div>
            <div class="fields">
              <field-check>Đơn hàng</field-check><field-check>Ngày</field-check><field-check>Khách hàng</field-check>
              <field-check>Mã hàng</field-check><field-check>Nhóm hàng</field-check><field-check checked>Số lượng</field-check>
              <field-check checked>Giá trị</field-check><field-check>Tháng</field-check><field-check>Năm</field-check>
            </div>
          </div>
        </div>
        <div class="right">
          <p>Drag fields between areas below:</p>
          <area-box name="Filters"></area-box><area-box name="Columns" ruled></area-box>
          <area-box name="Rows" field="Số lượng" ruled></area-box><area-box name="Values" field="Sum of Giá trị" ruled></area-box>
          <div class="defer"><field-check>Defer Layo...</field-check><button disabled>Update</button></div>
        </div>
      </div>`;
  }
}
customElements.define('field-pane', FieldPane);

// ---------- status bar ----------
class StatusBar extends XlElement {
  getStyles() {
    return `
      :host { display: flex; align-items: center; height: 27px; background: #f3f3f3; border-top: 1px solid #c6c6c6; font-size: 12px; padding: 0 11px 0 9px; }
      .ready { display: flex; align-items: center; gap: 27px; margin-right: auto; }
      .view { width: 50px; height: 26px; display: grid; place-items: center; }
      .on { background: #c5c5c5; }
      .zoom { display: flex; align-items: center; gap: 6px; margin-left: 7px; }
      .zoom button { display: flex; }
      .pct { width: 46px; text-align: right; }
      input { appearance: none; width: 126px; height: 14px; background: linear-gradient(#333, #333) 0 7px / 100% 1px no-repeat; }
      input::-webkit-slider-thumb { appearance: none; width: 6px; height: 14px; background: #666; }
    `;
  }
  getMarkup() {
    return `
      <span class="ready">Ready<xl-icon name="macro"></xl-icon></span>
      <button class="view on" aria-label="Normal"><xl-icon name="normal"></xl-icon></button>
      <button class="view" aria-label="Page Layout"><xl-icon name="page"></xl-icon></button>
      <button class="view" aria-label="Page Break Preview"><xl-icon name="breaks"></xl-icon></button>
      <div class="zoom">
        <button aria-label="Zoom Out"><xl-icon name="minus"></xl-icon></button>
        <input type="range" aria-label="Zoom" min="0" max="100" value="50">
        <button aria-label="Zoom In"><xl-icon name="add"></xl-icon></button>
      </div>
      <span class="pct">100%</span>`;
  }
}
customElements.define('status-bar', StatusBar);

// ---------- taskbar ----------
class TaskBar extends XlElement {
  getStyles() {
    return `
      :host { display: flex; height: 50px; color: #fff; background: linear-gradient(90deg, #22353c 0, #22353c 3%, #444 28%, #2e4046 38%, #263343 50%, #1f2731 65%, #24212a 85%, #1d1b22 100%); }
      button { display: grid; place-items: center; }
      .start { width: 60px; }
      .search { display: flex; align-items: center; gap: 13px; width: 430px; background: #f2f2f2; border: 1px solid #c6c6c6; padding-left: 14px; }
      .search input { flex: 1; font-size: 18px; }
      .search input::placeholder { color: #333; opacity: 1; }
      .apps { display: flex; }
      .apps button { width: 62px; position: relative; }
      .apps .open { background: linear-gradient(#76b9ed, #76b9ed) 50% 100% / 51px 3px no-repeat; }
      .apps .front { background: linear-gradient(#76b9ed, #76b9ed) 0 100% / 100% 3px no-repeat #525257; }
      .tray { display: flex; align-items: center; margin-left: auto; }
      .tray .temp { font-size: 17px; margin: 0 21px 0 9px; }
      .icons { display: flex; align-items: center; gap: 13px; }
      time { width: 84px; margin-left: 4px; text-align: center; line-height: 23px; }
      .note { margin: 3px 13px 0 16px; }
      .edge { width: 6px; height: 50px; border-left: 1px solid #77757c; }
    `;
  }
  getMarkup() {
    const apps = ['taskview', 'edge', 'folder*', 'store', 'dropbox', 'arch', 'unikey', 'office', 'zalo*', 'remote', 'mail', 'chrome*', 'zoom', 'spotify*', 'teams*', 'excel!'];
    const app = a => {
      const name = a.replace(/[*!]/, '');
      const state = a.endsWith('*') ? 'open' : a.endsWith('!') ? 'front' : '';
      return `<button class="${state}" aria-label="${name}"><xl-icon name="${name}"></xl-icon></button>`;
    };
    return `
      <button class="start" aria-label="Start"><xl-icon name="win"></xl-icon></button>
      <label class="search"><xl-icon name="lens"></xl-icon><input type="text" placeholder="Type here to search" aria-label="Search"></label>
      <div class="apps">${apps.map(app).join('')}</div>
      <div class="tray">
        <xl-icon name="weather"></xl-icon><span class="temp">69°F</span>
        <div class="icons">${['chevup', 'meet', 'cloud', 'wifi', 'battery'].map(n => `<xl-icon name="${n}"></xl-icon>`).join('')}</div>
        <time>7:54 PM<br>22-Jan-22</time>
        <xl-icon class="note" name="note"></xl-icon><span class="edge"></span>
      </div>`;
  }
}
customElements.define('task-bar', TaskBar);

// ---------- message box ----------
class MessageBox extends XlElement {
  getStyles() {
    return `
      :host { display: block; width: 252px; border: 1px solid #666; background: #f0f0f0; color: #000; box-shadow: 0 5px 16px rgba(0, 0, 0, .45); }
      header { display: flex; align-items: center; justify-content: space-between; height: 37px; background: #fff; padding: 0 14px 0 9px; }
      header button { display: flex; }
      .body { display: flex; align-items: center; gap: 16px; padding: 17px 0 0 16px; font-size: 12px; white-space: nowrap; }
      .ok { display: block; width: 73px; height: 28px; margin: 12px auto 9px; border: 2px solid #0078d7; background: #e1e1e1; font-size: 12px; }
    `;
  }
  getMarkup() {
    return `
      <header>${this.getAttribute('caption')}<button aria-label="Close"><xl-icon name="close"></xl-icon></button></header>
      <div class="body"><xl-icon name="warn"></xl-icon><slot></slot></div>
      <button class="ok">OK</button>`;
  }
}
customElements.define('message-box', MessageBox);

// ---------- window ----------
class ExcelApp extends XlElement {
  getStyles() {
    return `
      :host { display: grid; grid-template-rows: auto auto auto 1fr auto auto; height: 100vh; }
      .work { display: grid; grid-template-columns: 1fr 438px; min-height: 0; }
      .book { display: grid; grid-template-rows: 1fr 29px; min-width: 0; min-height: 0; }
      .view { display: grid; grid-template-columns: 1fr 19px; column-gap: 3px; padding-right: 3px; min-height: 0; min-width: 0; }
      .view scroll-bar { margin-top: 2px; }
      sheet-tabs { padding-right: 25px; }
      message-box { position: absolute; left: calc(50% - 117px); top: 476px; }
    `;
  }
  getMarkup() {
    return `
      <title-bar></title-bar>
      <ribbon-bar></ribbon-bar>
      <formula-bar></formula-bar>
      <div class="work">
        <div class="book">
          <div class="view"><sheet-grid></sheet-grid><scroll-bar vertical style="--size:472px"></scroll-bar></div>
          <sheet-tabs></sheet-tabs>
        </div>
        <field-pane></field-pane>
      </div>
      <status-bar></status-bar>
      <task-bar></task-bar>
      <message-box caption="Microsoft Excel" role="alertdialog">Cannot group that selection.</message-box>`;
  }
}
customElements.define('excel-app', ExcelApp);
</script>
</body>
</html>
